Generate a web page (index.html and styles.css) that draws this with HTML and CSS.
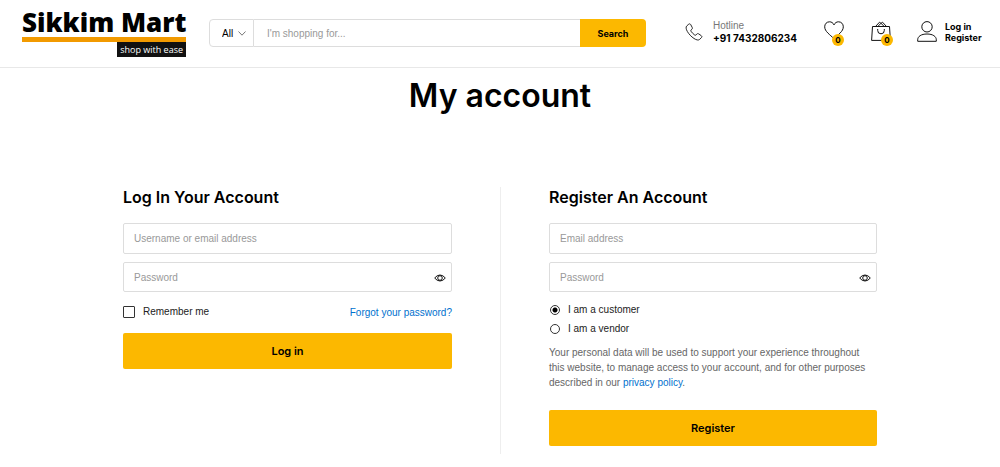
FILE: index.html
```html
<!DOCTYPE html>
<html lang="en">
<head>
<meta charset="utf-8">
<meta name="viewport" content="width=device-width, initial-scale=1">
<title>My account – Sikkim Mart</title>
<link rel="stylesheet" href="styles.css">
</head>
<body>
<header class="site-header">
  <a class="logo" href="#">
    <span class="logo-name">Sikkim Mart</span>
    <span class="logo-tag">shop with ease</span>
  </a>
  <form class="search" role="search">
    <span class="search-category">
      <select aria-label="Category"><option>All</option></select>
      <svg class="chevron" viewBox="0 0 8 5" aria-hidden="true"><path d="M.5.5 4 4.2 7.5.5"/></svg>
    </span>
    <input class="search-input" type="text" placeholder="I'm shopping for..." aria-label="Search products">
    <button class="search-button" type="submit">Search</button>
  </form>
  <div class="hotline">
    <svg class="icon icon-phone" viewBox="0 0 20 20" aria-hidden="true"><path d="M4.2 1.3 2 3.2C.7 4.4 1.1 6.800 2.600 9.400 4.200 12.200 6.900 15.200 10 17.200c2.600 1.700 5 2.300 6.300 1l2-2c.7-.7.6-1.500-.2-2.100l-2.900-2c-.7-.5-1.500-.4-2.100.2l-.9 1c-.4.4-.9.5-1.400.1-1.700-1.200-3-2.600-4.100-4.200-.4-.6-.3-1.100.1-1.500l.9-.8c.6-.6.7-1.300.3-2L6.300 1.700C5.800.9 4.900.7 4.200 1.300Z"/></svg>
    <div class="hotline-text"><span class="hotline-label">Hotline</span><strong>+91 7432806234</strong></div>
  </div>
  <a class="icon-link" href="#" aria-label="Wishlist">
    <svg class="icon icon-heart" viewBox="0 0 20 19" aria-hidden="true"><path d="M10 3.900C9 1.800 7.500.800 5.500.800 2.700.800.700 2.900.700 5.800c0 4.700 5.200 7.700 9.300 12 4.100-4.300 9.300-7.300 9.300-12 0-2.900-2-5-4.800-5-2 0-3.500 1-4.500 3.100Z"/></svg>
    <span class="badge">0</span>
  </a>
  <a class="icon-link icon-link-cart" href="#" aria-label="Cart">
    <svg class="icon icon-bag" viewBox="0 0 20 20" aria-hidden="true"><path d="M1.500 5.500h17l.9 13.900H.600ZM4.500 5.500l4-4.300 1.500 1.200 1.500-1.200 4 4.300M7 5.300l3-3 3 3M6.700 8v1.500a3.300 3.300 0 0 0 6.600 0V8"/></svg>
    <span class="badge">0</span>
  </a>
  <div class="account">
    <svg class="icon icon-user" viewBox="0 0 20 21" aria-hidden="true"><circle cx="10" cy="5.800" r="5.200"/><path d="M.7 20.300v-1.500c0-3.300 3.400-5.800 9.300-5.800s9.300 2.500 9.300 5.800v1.500Z"/></svg>
    <nav class="account-links" aria-label="Account"><a href="#login">Log in</a><a href="#register">Register</a></nav>
  </div>
</header>
<main class="page">
  <h1 class="page-title">My account</h1>
  <div class="forms">
    <form class="panel" id="login">
      <h2 class="panel-title">Log In Your Account</h2>
      <input class="field" type="text" placeholder="Username or email address" aria-label="Username or email address">
      <div class="password">
        <input class="field" type="password" placeholder="Password" aria-label="Password">
        <button class="reveal" type="button" aria-label="Show password"><svg viewBox="0 0 12 8" aria-hidden="true"><path d="M.7 4Q3 1 6 1t5.300 3Q9 7 6 7T.7 4Z"/><circle cx="6" cy="4" r="2.300"/></svg></button>
      </div>
      <div class="options">
        <label class="choice remember"><input class="checkbox" type="checkbox">Remember me</label>
        <a class="link forgot" href="#">Forgot your password?</a>
      </div>
      <button class="submit" type="submit">Log in</button>
    </form>
    <form class="panel panel-register" id="register">
      <h2 class="panel-title">Register An Account</h2>
      <input class="field" type="email" placeholder="Email address" aria-label="Email address">
      <div class="password">
        <input class="field" type="password" placeholder="Password" aria-label="New password">
        <button class="reveal" type="button" aria-label="Show password"><svg viewBox="0 0 12 8" aria-hidden="true"><path d="M.7 4Q3 1 6 1t5.300 3Q9 7 6 7T.7 4Z"/><circle cx="6" cy="4" r="2.300"/></svg></button>
      </div>
      <div class="roles">
        <label class="choice"><input class="radio" type="radio" name="role" checked>I am a customer</label>
        <label class="choice"><input class="radio" type="radio" name="role">I am a vendor</label>
      </div>
      <p class="privacy">Your personal data will be used to support your experience throughout this website, to manage access to your account, and for other purposes described in our <a class="link" href="#">privacy policy</a>.</p>
      <button class="submit" type="submit">Register</button>
    </form>
  </div>
</main>
</body>
</html>
```

FILE: styles.css
```css
* { box-sizing: border-box; }

body {
  margin: 0;
  background: #fff;
  color: #000;
  font-family: "Liberation Sans", Arial, sans-serif;
  font-size: 10px;
  line-height: 15px;
}

a { color: inherit; text-decoration: none; }
button, input, select { font: inherit; color: inherit; margin: 0; }
button { cursor: pointer; border: 0; padding: 0; }
h1, h2, strong, .submit, .search-button, .badge, .account-links { font-family: Inter, "Liberation Sans", sans-serif; }
svg { display: block; fill: none; stroke: #111; }

.site-header {
  display: flex;
  align-items: flex-start;
  min-height: 68px;
  padding: 8px 16px 8px 22px;
  border-bottom: 1px solid #e8e8e8;
}

.logo {
  display: flex;
  flex-direction: column;
  align-items: flex-end;
  width: 164px;
  font-family: "Open Sans", sans-serif;
}
.logo-name {
  width: 100%;
  border-bottom: 5px solid #f29a00;
  font-size: 26px;
  font-weight: 800;
  line-height: 29px;
  white-space: nowrap;
}
.logo-tag {
  padding: 0 3px;
  background: #111;
  color: #fff;
  font-size: 9px;
  line-height: 15px;
}

.search {
  display: flex;
  flex: 1;
  height: 28px;
  margin: 11px 39px 0 23px;
}
.search-category {
  position: relative;
  display: flex;
  width: 45px;
  border: 1px solid #ddd;
  border-radius: 4px 0 0 4px;
}
.search-category select {
  width: 100%;
  padding: 0 0 0 12px;
  border: 0;
  background: none;
  appearance: none;
}
.chevron {
  position: absolute;
  top: 11px;
  right: 7px;
  width: 8px;
  height: 5px;
  stroke: #777;
  pointer-events: none;
}
.search-input {
  flex: 1;
  min-width: 0;
  padding: 0 13px;
  border: solid #ddd;
  border-width: 1px 0;
  background: #fff;
}
.search-button {
  width: 66px;
  border-radius: 0 4px 4px 0;
  background: #fcb800;
  font-size: 9px;
  font-weight: 700;
}
::placeholder { color: #999; opacity: 1; }

.hotline { display: flex; gap: 10px; width: 139px; margin-top: 12px; }
.hotline-text {
  display: flex;
  flex-direction: column;
  line-height: 12px;
  white-space: nowrap;
}
.hotline-label { color: #777; }
.hotline-text strong { font-size: 10px; font-weight: 700; }
.icon { flex: none; width: 20px; height: 20px; }
.icon-phone { width: 18px; height: 18px; margin-top: 3px; }
.icon-link { position: relative; width: 20px; margin: 13px 27px 0 0; }
.icon-link-cart { margin-right: 26px; }
.icon-heart { height: 19px; }
.badge {
  position: absolute;
  top: 13px;
  left: 8px;
  width: 12px;
  height: 12px;
  border-radius: 50%;
  background: #fcb800;
  font-size: 8px;
  font-weight: 700;
  line-height: 12px;
  text-align: center;
}
.icon-link-cart .badge { left: 10px; }
.account { display: flex; gap: 8px; margin-top: 13px; }
.icon-user { height: 21px; }
.account-links {
  display: flex;
  flex-direction: column;
  width: 39px;
  font-size: 9px;
  font-weight: 700;
  line-height: 11px;
}

.page-title {
  margin: 8px 0 71px;
  font-size: 32px;
  font-weight: 600;
  line-height: 40px;
  text-align: center;
}
.forms {
  display: grid;
  grid-template-columns: 1fr 1fr;
  max-width: 850px;
  margin: 0 auto;
}
.panel { padding: 0 48px 8px; }
.panel-register { border-left: 1px solid #eee; }
.panel-title {
  margin: 0 0 16px;
  font-size: 16px;
  font-weight: 600;
  line-height: 20px;
}
.field {
  display: block;
  width: 100%;
  height: 31px;
  padding: 0 10px;
  border: 1px solid #ddd;
  border-radius: 2px;
  background: #fff;
}
.password { position: relative; margin-top: 8px; }
.password .field { height: 30px; padding-right: 32px; }
.reveal {
  position: absolute;
  top: 12px;
  right: 6px;
  background: none;
}
.reveal svg { width: 12px; height: 8px; }

.options { display: flex; justify-content: space-between; margin-top: 11px; }
.choice { display: flex; align-items: center; gap: 8px; color: #222; }
.link { color: #0071ce; }
.forgot { margin-top: 2px; }
.checkbox, .radio {
  flex: none;
  appearance: none;
  border: 1px solid #333;
  background: #fff;
}
.checkbox { width: 12px; height: 12px; border-radius: 1px; }
.checkbox:checked { background: #fcb800; }
.radio { width: 10px; height: 10px; border-radius: 50%; }
.radio:checked { background: radial-gradient(circle, #000 0 2px, #fff 3px); }
.roles {
  display: grid;
  gap: 4px;
  margin: 10px 0 9px 1px;
}
.submit {
  display: block;
  width: 100%;
  height: 36px;
  margin-top: 13px;
  border-radius: 2px;
  background: #fcb800;
  font-weight: 600;
  font-size: 11px;
}
.privacy { margin: 0; color: #666; }
.privacy + .submit { margin-top: 20px; }
```
